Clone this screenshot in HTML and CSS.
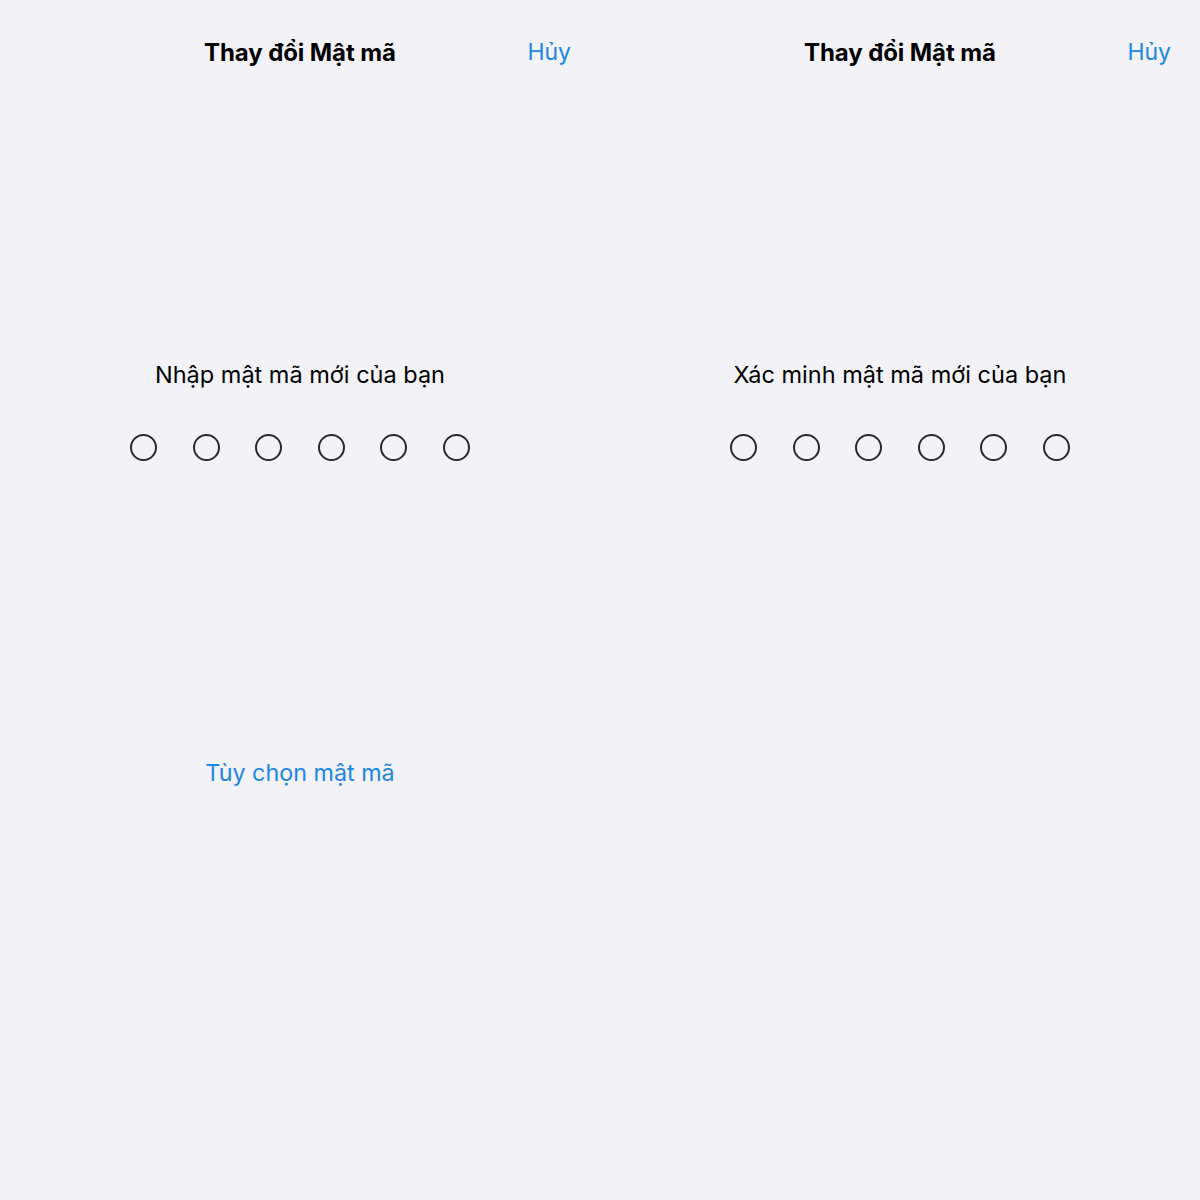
FILE: index.html
```html
<!DOCTYPE html>
<html lang="vi">
<head>
    <meta charset="UTF-8">
    <meta name="viewport" content="width=device-width, initial-scale=1.0">
    <title>Thay đổi Mật mã</title>
    <link rel="stylesheet" href="styles.css">
</head>
<body>
    <div id="screens">
        <div class="pane">
            <div class="navbar">
                <span></span>
                <h1 class="title">Thay đổi Mật mã</h1>
                <a class="cancel" href="#">Hủy</a>
            </div>
            <p class="prompt">Nhập mật mã mới của bạn</p>
            <div class="dots">
                <span class="dot"></span>
                <span class="dot"></span>
                <span class="dot"></span>
                <span class="dot"></span>
                <span class="dot"></span>
                <span class="dot"></span>
            </div>
            <a class="options" href="#">Tùy chọn mật mã</a>
        </div>

        <div class="pane">
            <div class="navbar">
                <span></span>
                <h1 class="title">Thay đổi Mật mã</h1>
                <a class="cancel" href="#">Hủy</a>
            </div>
            <p class="prompt">Xác minh mật mã mới của bạn</p>
            <div class="dots">
                <span class="dot"></span>
                <span class="dot"></span>
                <span class="dot"></span>
                <span class="dot"></span>
                <span class="dot"></span>
                <span class="dot"></span>
            </div>
        </div>
    </div>
</body>
</html>
```

FILE: styles.css
```css
html, body{
    margin: 0;
    padding: 0;
    background-color: #f2f2f7;
}
body{
    font-family: Inter, "Noto Sans", sans-serif;
    color: #000;
}

#screens{
    display: flex;
    width: 1200px;
    height: 1200px;
}

.pane{
    width: 600px;
    display: flex;
    flex-direction: column;
    align-items: center;
}

.navbar{
    width: 100%;
    height: 104px;
    display: grid;
    grid-template-columns: 1fr auto 1fr;
    align-items: center;
}
.title{
    margin: 0;
    font-size: 24px;
    font-weight: 700;
    letter-spacing: -0.1px;
}
.cancel{
    justify-self: end;
    padding-right: 29px;
    font-size: 23px;
    color: #1e86e3;
    text-decoration: none;
}

.prompt{
    margin: 256px 0 0 0;
    line-height: 30px;
    font-size: 23.5px;
}

.dots{
    display: flex;
    gap: 35.5px;
    margin-top: 44px;
}
.dot{
    width: 27px;
    height: 27px;
    box-sizing: border-box;
    border: 2px solid #2a2a2c;
    border-radius: 50%;
}

.options{
    margin-top: 297px;
    line-height: 30px;
    font-size: 23.3px;
    color: #1e86e3;
    text-decoration: none;
}
```
